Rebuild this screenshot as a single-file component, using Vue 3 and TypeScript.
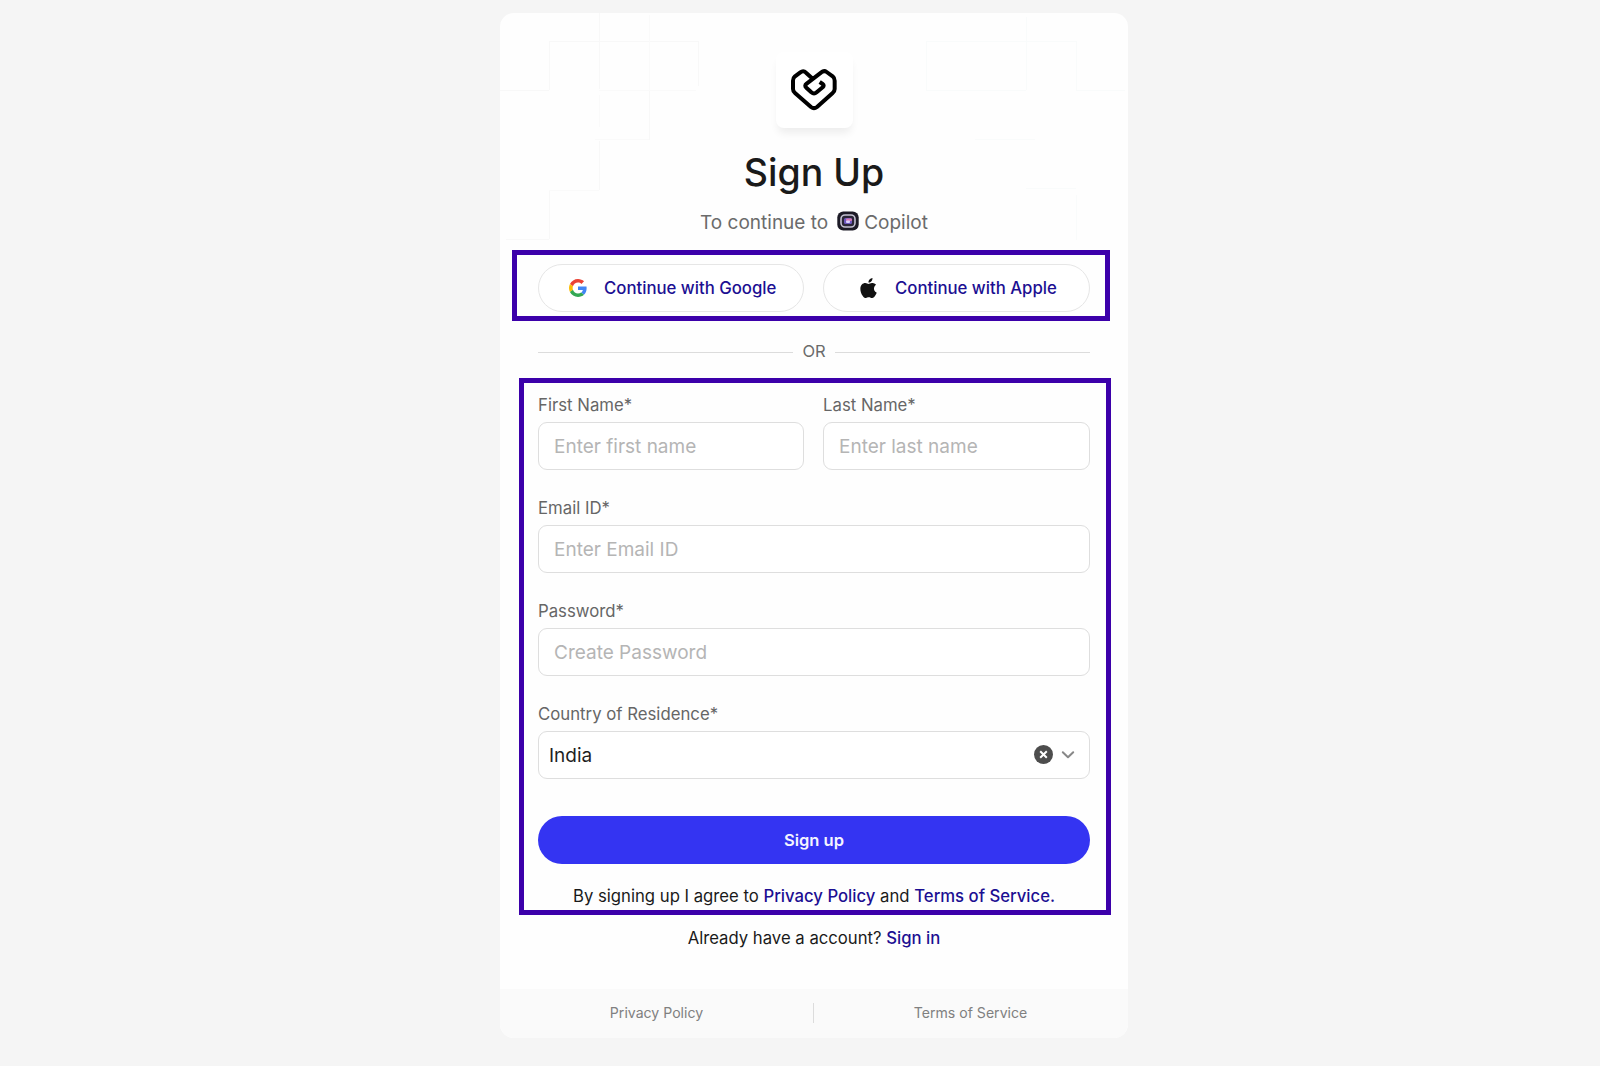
<script setup lang="ts">
import { ref } from 'vue'

interface Field {
  id: string
  label: string
  placeholder: string
  type: string
  half?: boolean
}

const fields: Field[] = [
  { id: 'first', label: 'First Name*', placeholder: 'Enter first name', type: 'text', half: true },
  { id: 'last', label: 'Last Name*', placeholder: 'Enter last name', type: 'text', half: true },
  { id: 'email', label: 'Email ID*', placeholder: 'Enter Email ID', type: 'email' },
  { id: 'password', label: 'Password*', placeholder: 'Create Password', type: 'password' },
]

const values = ref<Record<string, string>>({ first: '', last: '', email: '', password: '' })
const country = ref('India')
</script>

<template>
  <div class="page">
    <main class="card">
      <svg class="pattern" width="628" height="240" viewBox="500 13 628 240" fill="none">
        <path
          d="M599.5 13v76M599.5 141v49M649.5 90v50M549.5 42v48M698.5 42v44M549 41.5h150M500 90.5h49M549.5 190v49M506 239.5h43"
          stroke="#f8f8f8"
        />
        <path d="M599.5 95v32M649.5 15v75M599 90.5h97M595 139.5h54M549 190.5h50" stroke="#fafafa" />
        <path
          d="M926.5 41.5h150M926.5 41v49M926 90.5h100M1026.5 17v73M1076.5 41v49M1076 90.5h49M975 139.5h60M1026 188.5h50M1076.5 195v45"
          stroke="#f9fbfb"
        />
      </svg>

      <header class="header">
        <div class="logo">
          <svg width="48" height="46" viewBox="90 50 144 138" fill="none">
            <path
              d="M162 89L138 67Q130 59 121 66L104 79Q99 83 99 91V116Q99 123 105 128L153 170Q162 177 171 170L218 128Q224 123 224 116V91Q224 83 218 78L200 65Q192 59 184 66L140 100Q132 106 139 112L154 126Q162 133 170 126L188 111Q194 105 188 101L179 95"
              stroke="#000"
              stroke-width="12"
              stroke-linejoin="round"
            />
          </svg>
        </div>
        <h1 class="title">Sign Up</h1>
        <p class="subtitle">
          <span>To continue to</span>
          <svg class="app-icon" width="22" height="20" viewBox="0 0 22 20">
            <rect x="0.3" y="0.5" width="21.4" height="19" rx="6" fill="#1c1a26" />
            <rect x="4" y="4" width="14" height="12" rx="4" fill="#2a2638" stroke="#c5c2d2" stroke-width="1.6" />
            <rect x="7" y="7" width="8" height="6" rx="1.5" fill="#6d58bd" />
            <rect x="9" y="7.4" width="6" height="2.6" rx="1" fill="#d878b4" />
            <rect x="9" y="9.6" width="4" height="2.4" rx="1" fill="#d9d3ff" />
          </svg>
          <span>Copilot</span>
        </p>
      </header>

      <section class="frame frame-social">
        <button class="social google" type="button">
          <svg width="18" height="18" viewBox="0 0 48 48">
            <path fill="#EA4335" d="M24 9.5c3.54 0 6.71 1.22 9.21 3.6l6.85-6.85C35.9 2.38 30.47 0 24 0 14.62 0 6.51 5.38 2.56 13.22l7.98 6.19C12.43 13.72 17.74 9.5 24 9.5z" />
            <path fill="#4285F4" d="M46.98 24.55c0-1.57-.15-3.09-.38-4.55H24v9.02h12.94c-.58 2.96-2.26 5.48-4.78 7.18l7.73 6c4.51-4.18 7.09-10.36 7.09-17.65z" />
            <path fill="#FBBC05" d="M10.53 28.59c-.48-1.45-.76-2.99-.76-4.59s.27-3.14.76-4.59l-7.98-6.19C.92 16.46 0 20.12 0 24c0 3.88.92 7.54 2.56 10.78l7.97-6.19z" />
            <path fill="#34A853" d="M24 48c6.48 0 11.93-2.13 15.89-5.81l-7.73-6c-2.15 1.45-4.92 2.3-8.16 2.3-6.26 0-11.57-4.22-13.47-9.91l-7.98 6.19C6.51 42.62 14.62 48 24 48z" />
          </svg>
          <span>Continue with Google</span>
        </button>
        <button class="social apple" type="button">
          <svg width="17" height="20" viewBox="0 0 814 1000">
            <path
              fill="#111"
              d="M788 341c-6 5-108 62-108 190 0 149 130 201 134 203-1 3-21 72-69 142-43 61-87 123-155 123s-86-39-164-39c-76 0-103 41-166 41s-106-58-156-127C46 791 0 666 0 547c0-191 124-292 247-292 65 0 119 43 160 43 39 0 100-45 174-45 28 0 129 3 207 88zM554 159c31-37 53-88 53-139 0-7-1-14-2-20-50 2-110 34-146 76-28 32-55 83-55 135 0 8 1 16 2 18 3 1 8 1 13 1 46 0 103-30 135-71z"
            />
          </svg>
          <span>Continue with Apple</span>
        </button>
      </section>

      <div class="divider"><span>OR</span></div>

      <form class="frame frame-form" @submit.prevent>
        <div class="fields">
          <div v-for="field in fields" :key="field.id" class="field" :class="{ half: field.half }">
            <label :for="field.id">{{ field.label }}</label>
            <input :id="field.id" v-model="values[field.id]" class="control" :type="field.type" :placeholder="field.placeholder" />
          </div>
          <div class="field">
            <label>Country of Residence*</label>
            <div class="control select">
              <span class="select-value">{{ country }}</span>
              <svg width="19" height="19" viewBox="0 0 19 19">
                <circle cx="9.5" cy="9.5" r="9.5" fill="#4d4d4d" />
                <path d="M6.2 6.2l6.6 6.6M12.8 6.2l-6.6 6.6" stroke="#fff" stroke-width="2" />
              </svg>
              <svg class="chevron" width="14" height="10" viewBox="0 0 14 10" fill="none">
                <path d="M1.8 2.2L7 7.2l5.2-5" stroke="#888" stroke-width="2" stroke-linecap="round" stroke-linejoin="round" />
              </svg>
            </div>
          </div>
        </div>
        <button class="submit" type="submit">Sign up</button>
        <p class="terms">By signing up I agree to <a>Privacy Policy</a> and <a>Terms of Service.</a></p>
      </form>

      <p class="signin">Already have a account? <a>Sign in</a></p>

      <footer class="footer">
        <a>Privacy Policy</a>
        <a>Terms of Service</a>
      </footer>
    </main>
  </div>
</template>

<style>
body {
  margin: 0;
  background: #f5f5f5;
}
</style>

<style scoped>
.page {
  box-sizing: border-box;
  height: 1066px;
  padding: 13px 0 0 500px;
  overflow: hidden;
  font-family: Inter, 'Liberation Sans', sans-serif;
  color: #1a1a1a;
}
.page * {
  box-sizing: border-box;
}
.card {
  position: relative;
  display: flex;
  flex-direction: column;
  width: 628px;
  height: 1025px;
  border-radius: 14px;
  background: #fefefe;
  overflow: hidden;
}
.pattern {
  position: absolute;
  top: 0;
  left: 0;
}
.header {
  position: relative;
  display: flex;
  flex-direction: column;
  align-items: center;
  height: 237px;
  padding-top: 39px;
}
.logo {
  display: flex;
  justify-content: center;
  width: 77px;
  height: 76px;
  padding-top: 14.5px;
  border-radius: 8px;
  background: #fff;
  box-shadow: 0 7px 9px -2px rgba(0, 0, 0, 0.07);
}
.title {
  margin: 21px 0 0;
  font-size: 37.5px;
  font-weight: 500;
  line-height: 48px;
}
.subtitle {
  display: flex;
  align-items: center;
  margin: 13.5px 0 0;
  font-size: 19px;
  line-height: 24px;
  color: #6b6b6b;
}
.app-icon {
  margin: 0 5px 3px 9px;
}
.frame {
  border: 5px solid #3c00aa;
}
.frame-social {
  display: flex;
  gap: 19px;
  width: 598px;
  height: 71px;
  margin-left: 12px;
  padding: 9px 0 0 21px;
}
.social {
  display: flex;
  align-items: center;
  width: 266px;
  height: 48px;
  padding: 0;
  border: 1px solid #e6e6e6;
  border-radius: 24px;
  background: #fff;
  font: 500 16.75px/24px Inter, sans-serif;
  color: #1c0f92;
}
.google {
  padding-left: 30px;
}
.google svg {
  margin-right: 17px;
}
.apple {
  width: 267px;
  padding-left: 36px;
}
.apple svg {
  margin-right: 18px;
}
.divider {
  display: flex;
  align-items: center;
  gap: 9px;
  height: 57px;
  margin: 0 38px;
  padding-top: 5px;
  font-size: 16.5px;
  line-height: 20px;
  color: #6b6b6b;
}
.divider span {
  margin-bottom: 3px;
}
.divider::before,
.divider::after {
  content: '';
  flex: 1;
  height: 1px;
  background: #dcdcdc;
}
.frame-form {
  width: 592px;
  height: 537px;
  margin-left: 19px;
  padding: 9px 16px 0 14px;
}
.fields {
  display: grid;
  grid-template-columns: 266px 267px;
  gap: 25px 19px;
}
.field {
  grid-column: span 2;
  min-width: 0;
}
.field.half {
  grid-column: span 1;
}
.field label {
  display: block;
  height: 30px;
  padding-top: 1px;
  font-size: 16.75px;
  line-height: 25px;
  color: #666;
}
.control {
  display: block;
  width: 100%;
  height: 48px;
  padding: 0 15px;
  border: 1px solid #dedede;
  border-radius: 9px;
  outline: none;
  background: #fff;
  font: 400 19px/24px Inter, sans-serif;
  color: #1f1f1f;
}
.control::placeholder {
  color: #b5b5b5;
  opacity: 1;
}
.select {
  display: flex;
  align-items: center;
  padding: 0 14px 1px 10px;
}
.select-value {
  flex: 1;
  padding-top: 2px;
}
.chevron {
  margin-left: 8px;
}
.submit {
  display: block;
  width: 100%;
  height: 48px;
  margin-top: 37px;
  padding: 0;
  border: 0;
  border-radius: 24px;
  background: #3434f2;
  font: 600 16.5px/24px Inter, sans-serif;
  color: #f4f4ff;
}
.terms,
.signin {
  margin: 0;
  font-size: 16.7px;
  line-height: 24px;
  text-align: center;
  white-space: nowrap;
}
.terms {
  margin-top: 20px;
}
.terms a,
.signin a {
  font-weight: 500;
  color: #1c0f92;
}
.signin {
  margin-top: 11px;
}
.footer {
  display: flex;
  align-items: center;
  height: 49px;
  margin-top: auto;
  padding: 0 1px 1px 0;
  background: #fafafa;
  font-size: 14.1px;
  color: #808080;
}
.footer a {
  flex: 1;
  text-align: center;
  line-height: 20px;
}
.footer a + a {
  border-left: 1px solid #dcdcdc;
}
</style>
